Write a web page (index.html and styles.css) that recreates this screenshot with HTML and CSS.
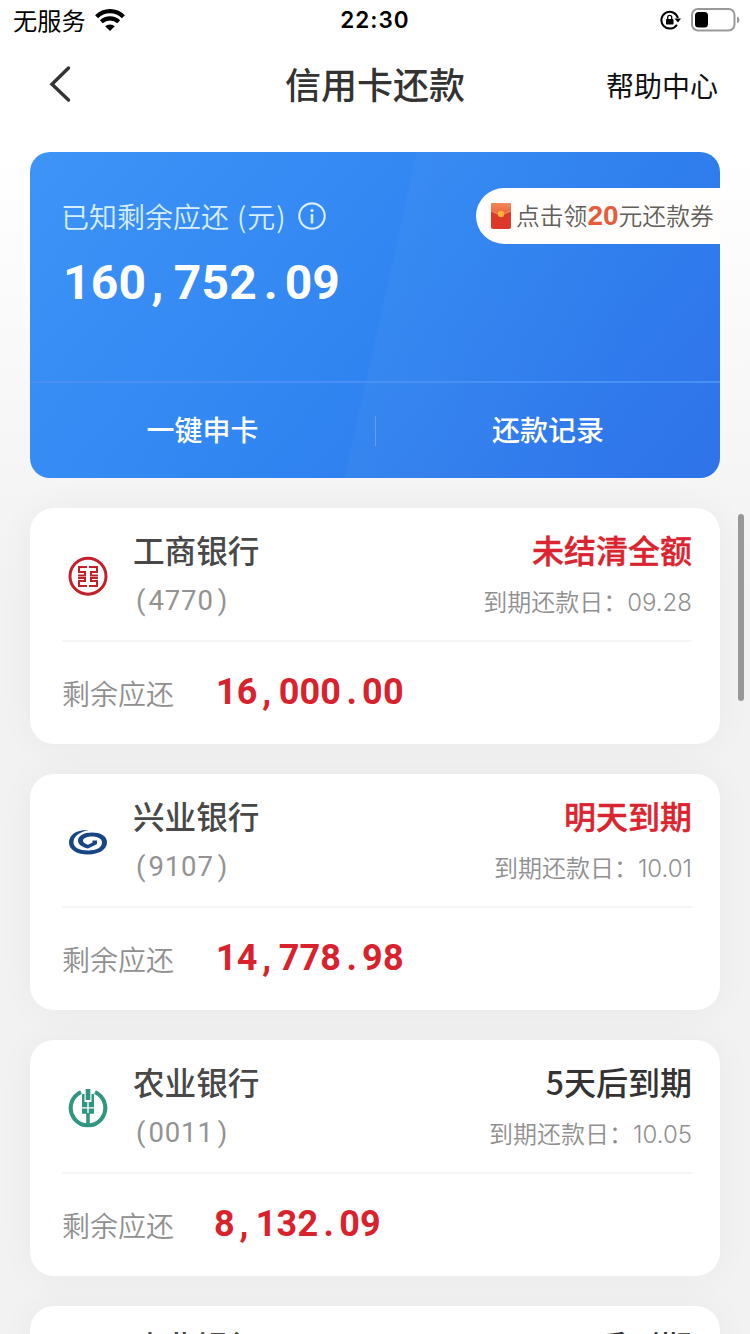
FILE: index.html
```html
<!DOCTYPE html>
<html lang="zh-CN">
<head>
<meta charset="utf-8">
<title>信用卡还款</title>
<link rel="stylesheet" href="styles.css">
</head>
<body>
<div class="status">
  <div class="carrier">无服务
    <svg width="30" height="22" viewBox="0 0 30 22"><path d="M15 22l-4.800-4.700a7 7 0 0 1 9.600 0z"/><path d="M6.300 12.800a12.500 12.500 0 0 1 17.400 0M1.600 7.700a19 19 0 0 1 26.800 0" fill="none" stroke="#000" stroke-width="4.200"/></svg>
  </div>
  <div class="clock">22:30</div>
  <div class="indicators">
    <svg width="22" height="20" viewBox="0 0 22 20"><path d="M16.900 14.700A8.400 8.400 0 1 1 17.900 8" fill="none" stroke="#000" stroke-width="2"/><path d="M14.500 8.500h6.500l-3 4z"/><rect x="6" y="9" width="7.500" height="5.500" rx=".8"/><path d="M7.700 9V7.300a2 2 0 0 1 4 0V9" fill="none" stroke="#000" stroke-width="1.300"/></svg>
    <svg width="49" height="24" viewBox="0 0 49 24"><rect x="1" y="1" width="42.500" height="21.500" rx="6" fill="none" stroke="#999" stroke-width="2"/><rect x="4" y="4" width="13" height="15.500" rx="3.500"/><path d="M46 8.500q2.500 1 2.500 3.400T46 15.300z" fill="#999"/></svg>
  </div>
</div>
<header class="nav">
  <svg class="back" width="24" height="40" viewBox="0 0 24 40"><path d="M20.500 3L4 19.200 20.500 35" fill="none" stroke="#333" stroke-width="3.400" stroke-linecap="round"/></svg>
  <h1>信用卡还款</h1>
  <span class="help">帮助中心</span>
</header>
<main>
  <section class="summary">
    <div class="summary-top">
      <div>
        <div class="summary-label"><span>已知剩余应还</span><span class="yuan">(元)</span>
          <svg width="28" height="28" viewBox="0 0 28 28"><circle cx="14" cy="14" r="12.700" fill="none" stroke="#d7eeff" stroke-width="2.200"/><circle cx="14" cy="8.500" r="1.600" fill="#d7eeff"/><path d="M14 12v9.500" stroke="#d7eeff" stroke-width="2.600"/></svg>
        </div>
        <div class="total">160<i>,</i>752<i>.</i>09</div>
      </div>
      <div class="coupon">
        <svg width="22" height="26" viewBox="0 0 22 26"><defs><linearGradient id="flap" x2="0" y2="1"><stop stop-color="#f08a5c"/><stop offset="1" stop-color="#ed6036"/></linearGradient></defs><rect x="1" width="20" height="26" rx="2" fill="#dd3928"/><path d="M1 8V2q0-2 2-2h16q2 0 2 2v6l-10 4z" fill="url(#flap)"/><path d="M1 8l10 4 10-4" fill="none" stroke="#f38c55" stroke-width="1.200"/><circle cx="11" cy="11" r="3.200" fill="#f9b13d"/></svg><span>点击领<b>20</b>元还款券</span>
      </div>
    </div>
    <div class="actions"><span>一键申卡</span><span>还款记录</span></div>
  </section>

  <section class="card">
    <div class="card-head">
      <svg class="logo" width="40" height="40" viewBox="0 0 40 40"><circle cx="20" cy="20.200" r="18" fill="none" stroke="#c3202b" stroke-width="3"/><path d="M19 11H11V16H17V19.500H10M10 22H17V25H11V30H19M21 11H29V16H23V19.500H30M30 22H23V25H29V30H21" fill="none" stroke="#c3202b" stroke-width="2"/></svg>
      <div class="bank"><h2>工商银行</h2><p><i>(</i>4770<i>)</i></p></div>
      <div class="due"><strong class="urgent">未结清全额</strong><p>到期还款日：<span>09.28</span></p></div>
    </div>
    <div class="card-foot"><span>剩余应还</span><b class="wide">16<i>,</i>000<i>.</i>00</b></div>
  </section>

  <section class="card">
    <div class="card-head">
      <svg class="logo" width="40" height="40" viewBox="0 0 40 40"><path d="M21 8C8 7.500 1 13 1 20.500 1 28 9 32.500 20 32.500S39 27.500 39 20.500 32 10.500 24 10.500C16 10.500 10 14 10 18.500c0 4 4 6.500 10 8l9-4.500v-3.500h-4.500v2l-4.500 2.300c-3-1-5-2.200-5-4 0-2.600 4-4.300 9-4.300 6 0 10 2.500 10 6 0 5-5.500 8-14 8S5.500 25.500 5.500 20.500C5.500 14.500 11 10 21 8z" fill="#174586"/></svg>
      <div class="bank"><h2>兴业银行</h2><p><i>(</i>9107<i>)</i></p></div>
      <div class="due"><strong class="urgent">明天到期</strong><p>到期还款日：<span>10.01</span></p></div>
    </div>
    <div class="card-foot"><span>剩余应还</span><b class="wide">14<i>,</i>778<i>.</i>98</b></div>
  </section>

  <section class="card">
    <div class="card-head">
      <svg class="logo" width="40" height="40" viewBox="0 0 40 40"><path d="M13 4.200A17.300 17.300 0 1 0 27 4.200" fill="none" stroke="#319582" stroke-width="4"/><path d="M17.700 1h4.600v11h-4.600zM14 6h2.500v8h2.800v5.300H14zM26 6h-2.500v8h-2.800v5.300H26zM14 20.600h5.300v5.200H14zM20.700 20.600H26v5.200h-5.300zM18.200 25h3.600v13h-3.600z" fill="#319582"/></svg>
      <div class="bank"><h2>农业银行</h2><p><i>(</i>0011<i>)</i></p></div>
      <div class="due"><strong>5天后到期</strong><p>到期还款日：<span>10.05</span></p></div>
    </div>
    <div class="card-foot"><span>剩余应还</span><b>8<i>,</i>132<i>.</i>09</b></div>
  </section>

  <section class="card card-next">
    <div class="card-head">
      <span class="logo"></span>
      <div class="bank"><h2>农业银行</h2></div>
      <div class="due"><strong>后到期</strong></div>
    </div>
  </section>
</main>
<div class="scrollbar"></div>
</body>
</html>
```
FILE: styles.css
```css
* { box-sizing: border-box; margin: 0; padding: 0; }
html { height: 1334px; overflow: hidden; }
body {
  position: relative;
  width: 750px;
  height: 1334px;
  overflow: hidden;
  background: linear-gradient(#fff 0, #fff 150px, #f5f5f5 480px, #f2f2f2 600px);
  font-family: "Noto Sans CJK SC", sans-serif;
  color: #333;
}
svg { flex: none; display: block; }
i { font-style: normal; display: inline-block; text-align: center; letter-spacing: 0; }

.status { display: grid; grid-template-columns: 1fr auto 1fr; align-items: center; height: 40px; padding: 0 10px 0 13px; color: #000; }
.carrier { display: flex; align-items: center; gap: 9px; font-size: 24.200px; line-height: 40px; }
.clock { font: 600 22.500px/40px Inter, sans-serif; letter-spacing: 1px; margin-right: 3px; }
.indicators { display: flex; align-items: center; justify-content: flex-end; gap: 9px; }

.nav { display: grid; grid-template-columns: 1fr auto 1fr; align-items: center; height: 90px; padding: 0 32px 0 48px; }
.nav h1 { font-size: 36px; font-weight: 500; line-height: 86px; height: 90px; margin-right: 16px; }
.help { justify-self: end; font-size: 28px; color: #111; }

main { display: flex; flex-direction: column; gap: 30px; height: 1204px; overflow: hidden; padding: 22px 30px 0; }

.summary {
  flex: none;
  height: 326px;
  border-radius: 20px;
  overflow: hidden;
  color: #fff;
  background:
    linear-gradient(102.500deg, transparent 50.600%, rgba(255, 255, 255, .03) 50.900%, transparent 85%),
    linear-gradient(130deg, #3f94f8 0, #3085f1 50%, #2f73e9 100%);
}
.summary-top { display: flex; justify-content: space-between; height: 229px; padding: 36px 0 0 31px; }
.summary-label { display: flex; align-items: center; height: 56px; font-size: 28px; font-weight: 350; color: #d7eeff; }
.summary-label .yuan { margin: 0 11px 0 8px; letter-spacing: 1px; }
.total { font: 700 48px/60px Roboto, sans-serif; margin: 9px 0 0 2px; letter-spacing: .200px; }
.total i { width: 27.600px; padding-right: 5px; }
.total i + i { padding-right: 0; }
.coupon { display: flex; align-items: center; gap: 4px; width: 244px; height: 56px; padding-left: 14px; border-radius: 28px 0 0 28px; background: #fffefc; color: #625e5b; font-size: 23.800px; font-weight: 350; white-space: nowrap; line-height: 52px; }
.coupon span { height: 54px; }
.coupon b { font: 700 28px "Liberation Sans", sans-serif; color: #e65b3c; }
.actions { display: grid; grid-template-columns: 1fr 1fr; height: 97px; border-top: 2px solid #4890f4; align-items: center; text-align: center; font-size: 28px; font-weight: 500; }
.actions span + span { border-left: 1px solid #649ff4; }
.actions span { height: 30px; line-height: 26px; }

.card { flex: none; height: 236px; padding: 0 28px 0 32px; border-radius: 24px; background: #fff; box-shadow: 0 0 36px rgba(0, 0, 0, .045); }
.card-head { display: flex; height: 134px; border-bottom: 2px solid #f5f5f5; }
.logo { width: 40px; height: 40px; margin: 48px 25px 0 6px; }
.bank { flex: 1; padding-top: 17px; }
.bank h2 { font-size: 31.600px; font-weight: 500; line-height: 48px; color: #484848; }
.bank p { font: 400 27.500px/36px Roboto, sans-serif; margin-top: 10px; color: #939393; letter-spacing: .900px; }
.bank i { width: 15.400px; }
.bank i + i { width: 13.500px; text-align: right; }
.due { text-align: right; padding-top: 17px; }
.due strong { display: block; font-size: 32px; line-height: 48px; font-weight: 500; }
.due .urgent { color: #da2530; -webkit-text-stroke: .4px #da2530; }
.due p { font-size: 24px; line-height: 36px; margin-top: 10px; font-weight: 350; color: #909090; }
.due span { font-family: Inter, sans-serif; font-weight: 350; }
.card-next .bank, .card-next .due { padding-top: 15px; }
.card-foot { display: flex; align-items: center; height: 101px; font-size: 28px; font-weight: 350; color: #909090; }
.card-foot b { font: 700 36px/42px Roboto, sans-serif; color: #d8222d; margin: 0 0 2px 40px; letter-spacing: .200px; }
.card-foot .wide { margin-left: 42px; }
.card-foot i { width: 20.900px; padding-right: 3px; }
.card-foot i + i { padding-right: 0; }

.scrollbar { position: absolute; right: 6px; top: 514px; width: 6px; height: 187px; border-radius: 3px; background: #989898; }
```
